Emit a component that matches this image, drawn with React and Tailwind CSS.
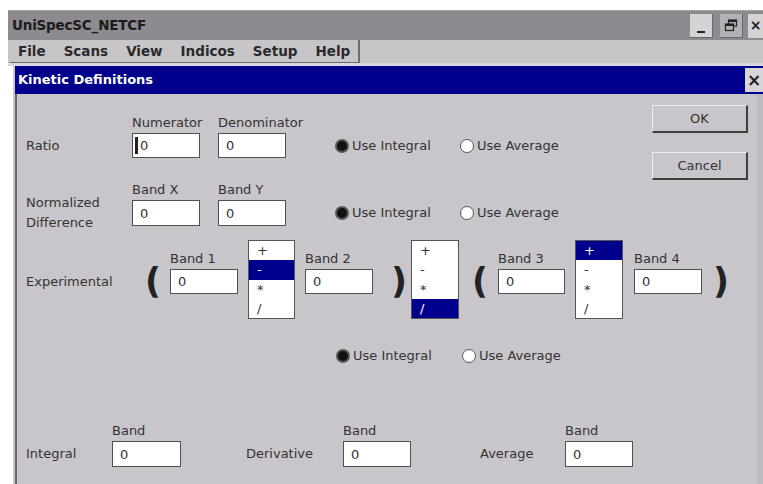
import React from "react";

const BLUE = "bg-[#00008c]";

function Field({ label, value = "0", width = "w-[68px]", caret = false, gap = "mt-[2px]", box = "h-[25px]" }) {
  return (
    <div className={`flex flex-col shrink-0 ${width}`}>
      <div className="h-[16px] leading-[16px] text-[13px] text-[#333] whitespace-nowrap">{label}</div>
      <div className={`${gap} ${box} bg-white border border-[#505050] flex items-center pl-[7px] text-[13px] leading-none text-[#333]`}>
        {caret && <span className="w-[3px] h-[17px] bg-[#222] -ml-[5px] mr-[2px]" />}
        <span>{value}</span>
      </div>
    </div>
  );
}

function Radio({ on, label, className = "" }) {
  return (
    <div className={`flex items-center shrink-0 ${className}`}>
      {on ? (
        <span className="w-[14px] h-[14px] rounded-full bg-[#111] border-2 border-[#555] shrink-0" />
      ) : (
        <span className="w-[14px] h-[14px] rounded-full bg-white border-[1.5px] border-[#555] shrink-0" />
      )}
      <span className="ml-[3px] text-[13px] leading-[16px] text-[#333] whitespace-nowrap">{label}</span>
    </div>
  );
}

function OpList({ sel, className = "" }) {
  const ops = ["+", "-", "*", "/"];
  return (
    <div className={`h-[79px] bg-white border border-[#555] flex flex-col shrink-0 ${className}`}>
      {ops.map((o, i) => (
        <div
          key={i}
          className={`flex-1 flex items-center pl-[8px] text-[13px] leading-none ${
            i === sel ? "bg-[#00008c] text-white" : "text-[#333]"
          }`}
        >
          {o}
        </div>
      ))}
    </div>
  );
}

function Paren({ ch, className = "" }) {
  return (
    <div className={`mt-[29px] h-[25px] flex items-center text-[35px] leading-none font-bold text-[#222] shrink-0 ${className}`}>
      {ch}
    </div>
  );
}

function Button({ children }) {
  return (
    <div className="h-[28px] w-[96px] flex items-center justify-center bg-[#c9c6cb] border-t border-l border-t-[#ecebed] border-l-[#ecebed] border-b-2 border-r-2 border-b-[#3e3e3e] border-r-[#3e3e3e] text-[13px] text-[#333]">
      {children}
    </div>
  );
}

export default function App() {
  return (
    <div className="w-[763px] h-[484px] bg-white overflow-hidden pt-[10px] pl-[8px] flex flex-col font-['DejaVu_Sans',sans-serif]">
      {/* application title bar */}
      <div className="h-[30px] bg-[#8d8a90] border-t border-[#a6a3a8] flex items-center overflow-hidden shrink-0">
        <span className="pl-[4px] text-[13.5px] font-bold text-[#1c1c1c] tracking-[-0.2px]">UniSpecSC_NETCF</span>
        <div className="ml-auto flex items-center">
          <div className="w-[23px] h-[24px] bg-[#d6d3d7] border-r border-b border-[#6a676c] flex items-end justify-center pb-[4px]">
            <span className="w-[8px] h-[2px] bg-[#222]" />
          </div>
          <div className="ml-[7px] w-[23px] h-[24px] bg-[#b3b0b5] border-r border-b border-[#6a676c] flex items-center justify-center">
            <svg width="14" height="13" viewBox="0 0 14 13">
              <rect x="4.5" y="1" width="8" height="6" fill="none" stroke="#222" strokeWidth="1.2" />
              <rect x="4.5" y="1" width="8" height="2" fill="#222" />
              <rect x="1.5" y="5" width="8" height="6.5" fill="#b3b0b5" stroke="#222" strokeWidth="1.2" />
              <rect x="1.5" y="5" width="8" height="2" fill="#222" />
            </svg>
          </div>
          <div className="ml-[5px] w-[15px] h-[24px] bg-[#d6d3d7] flex items-center justify-center text-[14px] font-bold text-[#222]">
            ×
          </div>
        </div>
      </div>

      {/* menu bar */}
      <div className="h-[26px] bg-[#c8c5c9] flex shrink-0 border-b-[3px] border-[#d9d7de]">
        <div className="ml-[2px] w-[350px] flex items-center gap-[18px] pl-[8px] border-r-2 border-b border-[#6d6a6f] text-[13.5px] font-bold text-[#2a2a2a]">
          <span>File</span>
          <span>Scans</span>
          <span>View</span>
          <span>Indicos</span>
          <span>Setup</span>
          <span>Help</span>
        </div>
      </div>

      {/* dialog */}
      <div className="flex-1 ml-[2px] border-l-[3px] border-white pl-[2px] bg-[#c9c6cb] flex flex-col">
        <div className={`h-[28px] ${BLUE} flex items-center shrink-0`}>
          <span className="pl-[3px] text-[13px] font-bold text-white">Kinetic Definitions</span>
          <div className="ml-auto w-[18px] h-[24px] bg-[#d8d5da] flex items-center justify-center text-[17px] font-bold text-[#222] leading-none">
            ×
          </div>
        </div>

        <div className="flex-1 border-l-2 border-[#6a676c] border-r-[6px] border-r-[#bebbc0] flex flex-col pl-[9px]">
          {/* ratio + normalized difference, with the dialog buttons */}
          <div className="flex items-start">
            <div className="w-[626px] pt-[21px] flex flex-col">
              <div className="flex items-end">
                <div className="w-[106px] h-[25px] flex items-center text-[13px] text-[#333] shrink-0">Ratio</div>
                <Field label="Numerator" caret />
                <Field label="Denominator" width="w-[68px] ml-[18px]" />
                <Radio on label="Use Integral" className="w-[125px] h-[25px] ml-[49px]" />
                <Radio label="Use Average" className="h-[25px]" />
              </div>
              <div className="mt-[24px] flex items-end">
                <div className="w-[106px] h-[26px] flex items-center text-[13px] leading-[20px] text-[#333] shrink-0">
                  <div>
                    Normalized
                    <br />
                    Difference
                  </div>
                </div>
                <Field label="Band X" box="h-[26px]" />
                <Field label="Band Y" width="w-[68px] ml-[18px]" box="h-[26px]" />
                <Radio on label="Use Integral" className="w-[125px] h-[26px] ml-[49px]" />
                <Radio label="Use Average" className="h-[26px]" />
              </div>
            </div>
            <div className="pt-[11px] flex flex-col gap-[19px]">
              <Button>OK</Button>
              <Button>Cancel</Button>
            </div>
          </div>

          {/* experimental expression */}
          <div className="mt-[14px] h-[79px] flex items-start">
            <div className="mt-[29px] w-[119px] h-[25px] flex items-center text-[13px] text-[#333] shrink-0">Experimental</div>
            <Paren ch="(" className="w-[25px]" />
            <div className="mt-[11px]">
              <Field label="Band 1" />
            </div>
            <OpList sel={1} className="ml-[10px] w-[47px]" />
            <div className="mt-[11px] ml-[10px]">
              <Field label="Band 2" />
            </div>
            <Paren ch=")" className="w-[38px] pl-[18px]" />
            <OpList sel={3} className="w-[48px]" />
            <Paren ch="(" className="w-[39px] pl-[13px]" />
            <div className="mt-[11px]">
              <Field label="Band 3" width="w-[67px]" />
            </div>
            <OpList sel={0} className="ml-[10px] w-[48px]" />
            <div className="mt-[11px] ml-[11px]">
              <Field label="Band 4" />
            </div>
            <Paren ch=")" className="ml-[11px]" />
          </div>

          <div className="mt-[29px] h-[16px] flex items-center ml-[310px]">
            <Radio on label="Use Integral" className="w-[126px]" />
            <Radio label="Use Average" />
          </div>

          {/* single-band indices */}
          <div className="mt-[59px] flex items-end">
            <div className="w-[86px] h-[26px] flex items-center text-[13px] text-[#333] shrink-0">Integral</div>
            <Field label="Band" width="w-[69px]" box="h-[26px]" />
            <div className="ml-[65px] w-[97px] h-[26px] flex items-center text-[13px] text-[#333] shrink-0">Derivative</div>
            <Field label="Band" box="h-[26px]" />
            <div className="ml-[69px] w-[85px] h-[26px] flex items-center text-[13px] text-[#333] shrink-0">Average</div>
            <Field label="Band" box="h-[26px]" />
          </div>
        </div>
      </div>
    </div>
  );
}
